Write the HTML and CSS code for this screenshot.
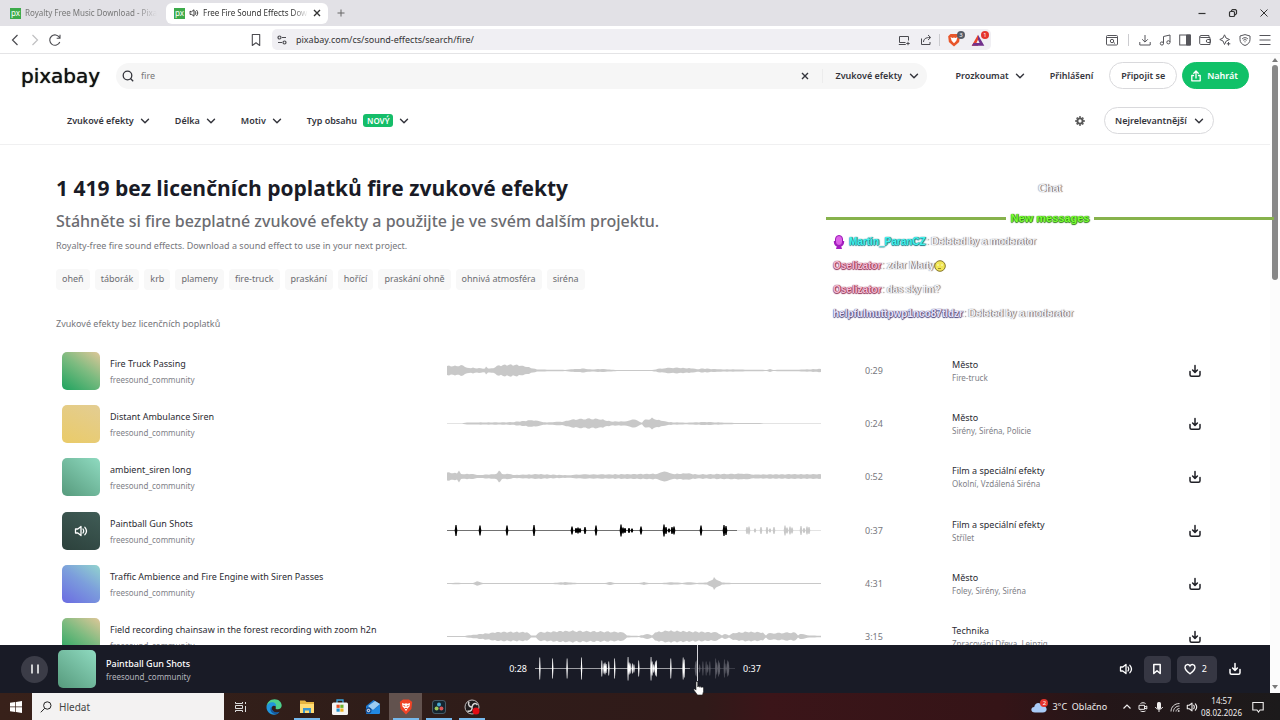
FILE: index.html
```html
<!DOCTYPE html>
<html lang="cs">
<head>
<meta charset="utf-8">
<title>Free Fire Sound Effects Download - Pixabay</title>
<link rel="stylesheet" href="styles.css">
</head>
<body>
<svg class="defs" aria-hidden="true">
  <defs>
    <symbol id="chev" viewBox="0 0 10 10"><path d="M1.500 3.200 5 6.800 8.500 3.200" fill="none" stroke="currentColor" stroke-width="1.400" stroke-linecap="round" stroke-linejoin="round"/></symbol>
    <symbol id="down" viewBox="0 0 14 14"><path d="M7 1.500v6.800M4.600 6 7 8.400 9.400 6M2 7.500v3.200c0 .9.6 1.500 1.500 1.500h7c.9 0 1.500-.6 1.500-1.500V7.500" fill="none" stroke="currentColor" stroke-width="1.500" stroke-linecap="round" stroke-linejoin="round"/></symbol>
    <symbol id="sound" viewBox="0 0 14 14"><path d="M1.500 5v4h2.300L7 11.500v-9L3.800 5zM9 5c.8 1.200.8 2.800 0 4M10.900 3.300c1.900 2.200 1.900 5.200 0 7.400" fill="none" stroke="currentColor" stroke-width="1.300" stroke-linecap="round" stroke-linejoin="round"/></symbol>
    <symbol id="close" viewBox="0 0 10 10"><path d="m2 2 6 6M8 2 2 8" fill="none" stroke="currentColor" stroke-width="1.400"/></symbol>
  </defs>
</svg>

<header class="tabs">
  <button class="tab"><span class="favicon">px</span><span class="tab-text">Royalty Free Music Download - Pixabay</span></button>
  <button class="tab active"><span class="favicon">px</span><svg class="i10"><use href="#sound"/></svg><span class="tab-text">Free Fire Sound Effects Download</span><svg class="i10"><use href="#close"/></svg></button>
  <button class="bare new-tab" aria-label="Nová karta"><svg class="i10" viewBox="0 0 10 10"><path d="M5 1.500v7M1.500 5h7" stroke="currentColor"/></svg></button>
  <div class="window-buttons">
    <button class="bare" aria-label="Minimalizovat"><svg class="i10" viewBox="0 0 10 10"><path d="M1.500 5.500h7" stroke="currentColor" stroke-width="1.200"/></svg></button>
    <button class="bare" aria-label="Obnovit"><svg class="i10" viewBox="0 0 10 10" fill="none" stroke="currentColor" stroke-width="1.200"><rect x="1.500" y="3.500" width="5" height="5" rx="1"/><path d="M3.500 3.500v-1l1-.9h3l1 1v3l-1 1h-.9"/></svg></button>
    <button class="bare" aria-label="Zavřít"><svg class="i10" viewBox="0 0 10 10"><path d="m1.500 1.500 7 7M8.500 1.500l-7 7" stroke="currentColor"/></svg></button>
  </div>
</header>

<nav class="toolbar" aria-label="Prohlížeč">
  <div class="nav-buttons">
    <button class="bare" aria-label="Zpět"><svg class="i14" viewBox="0 0 14 14"><path d="M9.500 2 4.500 7l5 5" fill="none" stroke="currentColor" stroke-width="1.200"/></svg></button>
    <button class="bare faded" aria-label="Vpřed"><svg class="i14" viewBox="0 0 14 14"><path d="m4.500 2 5 5-5 5" fill="none" stroke="currentColor" stroke-width="1.200"/></svg></button>
    <button class="bare" aria-label="Obnovit stránku"><svg class="i14" viewBox="0 0 14 14"><path d="M11.800 9A5.200 5.200 0 1 1 11.500 4.500M12 1.800v3.400H8.700" fill="none" stroke="currentColor" stroke-width="1.100"/></svg></button>
  </div>
  <div class="address-wrap">
    <button class="bare" aria-label="Záložka"><svg class="i14" viewBox="0 0 14 14"><path d="M3.300 1.500h7.400v11L7 9.800l-3.700 2.700z" fill="none" stroke="currentColor" stroke-width="1.100" stroke-linejoin="round"/></svg></button>
    <div class="address">
      <svg class="i12" viewBox="0 0 12 12" fill="none" stroke="currentColor" stroke-width="1.200"><circle cx="3.500" cy="3.500" r="1.500"/><path d="M6 3.500h4M2 8.500h4"/><circle cx="8.500" cy="8.500" r="1.500"/></svg>
      <input class="url" aria-label="Adresa" value="pixabay.com/cs/sound-effects/search/fire/">
      <button class="bare" aria-label="Instalovat"><svg class="i12" viewBox="0 0 12 12" fill="none" stroke="currentColor"><path d="M10.500 6.500V2.500h-9v6h6M.8 10.500h7M10 7.800v3.400M8.300 9.500h3.400"/></svg></button>
      <button class="bare" aria-label="Sdílet"><svg class="i12" viewBox="0 0 12 12" fill="none" stroke="currentColor"><path d="M1.500 4.500v6h8.500V8M3.500 8c.2-3 2-4.500 6.500-4.500M8 1l2.700 2.500L8 6"/></svg></button>
      <span class="sep"></span>
      <button class="bare badge-host" aria-label="Brave Shields"><svg class="i14" viewBox="0 0 12 12"><path d="M3 .8h6l2 2-.6 5L6 11.500 1.600 7.800 1 2.800z" fill="#e8562b"/><path d="m3 3.500 1.700.8L6 3.900l1.300.4L9 3.500 8 6.600 6 8.700 4 6.600z" fill="#fff"/></svg><span class="dot">3</span></button>
      <button class="bare badge-host" aria-label="Odměny"><svg class="i14" viewBox="0 0 12 12"><path d="M6 1.500.6 11H6L6 8.500H4.600L6 5.800z" fill="#e8452b"/><path d="M6 1.500 11.400 11H.6l1.600-2.500h5.200L6 5.800z" fill="#72318c"/></svg><span class="dot red">1</span></button>
    </div>
  </div>
  <div class="tool-icons">
    <button class="bare first" aria-label="Hledat na stránce"><svg class="i12" viewBox="0 0 12 12" fill="none" stroke="currentColor"><rect x=".5" y="1.500" width="11" height="9.500" rx="1"/><path d="M.5 3.500h11M7.500 8.200 9 9.600"/><circle cx="6" cy="7" r="1.700"/></svg></button>
    <span class="sep"></span>
    <button class="bare" aria-label="Stahování"><svg class="i12" viewBox="0 0 12 12" fill="none" stroke="currentColor"><path d="M6 1v7M3.200 5.300 6 8.100l2.800-2.800M.8 8v3h10.400V8"/></svg></button>
    <button class="bare" aria-label="Hudba"><svg class="i12" viewBox="0 0 12 12" fill="none" stroke="currentColor"><path d="M4.500 9.500v-7l6.500-1.500v7"/><circle cx="2.900" cy="9.500" r="1.600"/><circle cx="9.400" cy="8.300" r="1.600"/></svg></button>
    <button class="bare" aria-label="Postranní panel"><svg class="i12" viewBox="0 0 12 12" fill="none" stroke="currentColor"><rect x=".7" y="1" width="10.600" height="10"/><path d="M7.500 1h3.800v10H7.500z" fill="currentColor"/></svg></button>
    <button class="bare" aria-label="Peněženka"><svg class="i12" viewBox="0 0 12 12" fill="none" stroke="currentColor"><path d="M10 3.500v-2H2C.5 1.500.5 3.500 2 3.500h9v7H2c-1 0-1.300-.5-1.300-1.500V2.500M11.500 5.500H8.800a1.500 1.500 0 0 0 0 3h2.700z"/></svg></button>
    <button class="bare" aria-label="Leo AI"><svg class="i12" viewBox="0 0 12 12" fill="none" stroke="currentColor"><path d="M5.500.8 7 4l3.500 1.500L7.300 7 5.500 10.500 4 7 .8 5.500 4 4zM9.500 8v3.500M7.800 9.800h3.500"/></svg></button>
    <button class="bare" aria-label="VPN"><svg class="i12" viewBox="0 0 12 12" fill="none" stroke="currentColor"><path d="M6 .6 11 2v3.500c0 3-2 5-5 6-3-1-5-3-5-6V2zM3.200 4.800c1.600-1.500 4-1.500 5.600 0M4.300 6.300c1-.9 2.400-.9 3.400 0M5.500 7.800h1"/></svg></button>
    <button class="bare" aria-label="Nabídka"><svg class="i12" viewBox="0 0 12 12" stroke="currentColor"><path d="M.5 1.500h11M.5 6h11M.5 10.500h11"/></svg></button>
  </div>
</nav>

<div class="viewport">
  <div class="page">
    <div class="scroller">
      <header class="site-header">
        <div class="top-row">
          <a class="logo" href="#">pixabay</a>
          <form class="search">
            <svg class="i12" viewBox="0 0 12 12" fill="none" stroke="currentColor" stroke-width="1.300"><circle cx="5.500" cy="5.500" r="4.300"/><path d="m8.500 8.500 2.700 2.700"/></svg>
            <input aria-label="Hledat" value="fire">
            <button type="button" class="bare clear" aria-label="Vymazat"><svg class="i10"><use href="#close"/></svg></button>
            <span class="pick"><select aria-label="Kategorie"><option>Zvukové efekty</option></select><svg class="i10"><use href="#chev"/></svg></span>
          </form>
          <button class="bare menu explore">Prozkoumat<svg class="i10"><use href="#chev"/></svg></button>
          <a class="login" href="#">Přihlášení</a>
          <button class="pill join">Připojit se</button>
          <button class="pill upload"><svg class="i12" viewBox="0 0 12 12" fill="none" stroke="currentColor" stroke-width="1.300" stroke-linecap="round" stroke-linejoin="round"><path d="M6 8V1.200M3.800 3.200 6 1l2.200 2.200M3.500 5.500H1.800v5.300h8.400V5.500H8.500"/></svg>Nahrát</button>
        </div>
        <div class="filter-row">
          <button class="bare menu">Zvukové efekty<svg class="i10"><use href="#chev"/></svg></button>
          <button class="bare menu">Délka<svg class="i10"><use href="#chev"/></svg></button>
          <button class="bare menu">Motiv<svg class="i10"><use href="#chev"/></svg></button>
          <button class="bare menu">Typ obsahu<span class="new">NOVÝ</span><svg class="i10"><use href="#chev"/></svg></button>
          <button class="bare gear" aria-label="Nastavení"><svg class="i10" viewBox="0 0 10 10" fill="none" stroke="currentColor"><circle cx="5" cy="5" r="2.600" stroke-width="1.900"/><path d="M5 .3v1.500M5 8.200v1.500M.3 5h1.500M8.200 5h1.500M1.700 1.700l1 1M7.300 7.300l1 1M1.700 8.300l1-1M7.300 2.700l1-1" stroke-width="1.900"/></svg></button>
          <span class="pill pick sort"><select aria-label="Řazení"><option>Nejrelevantnější</option></select><svg class="i10"><use href="#chev"/></svg></span>
        </div>
      </header>

      <main>
        <h1>1 419 bez licenčních poplatků fire zvukové efekty</h1>
        <h2>Stáhněte si fire bezplatné zvukové efekty a použijte je ve svém dalším projektu.</h2>
        <p class="note">Royalty-free fire sound effects. Download a sound effect to use in your next project.</p>
        <nav class="tags" aria-label="Související">
          <a href="#">oheň</a><a href="#">táborák</a><a href="#">krb</a><a href="#">plameny</a><a href="#">fire-truck</a><a href="#">praskání</a><a href="#">hořící</a><a href="#">praskání ohně</a><a href="#">ohnivá atmosféra</a><a href="#">siréna</a>
        </nav>
        <p class="note list-title">Zvukové efekty bez licenčních poplatků</p>
        <ul class="tracks">
          <li class="track"><div class="thumb green"></div><div class="names"><a href="#">Fire Truck Passing</a><small>freesound_community</small></div><svg class="wave" data-wave="truck"></svg><time>0:29</time><div class="kind"><a href="#">Město</a><small>Fire-truck</small></div><button class="bare" aria-label="Stáhnout"><svg class="i14"><use href="#down"/></svg></button></li>
          <li class="track"><div class="thumb sand"></div><div class="names"><a href="#">Distant Ambulance Siren</a><small>freesound_community</small></div><svg class="wave" data-wave="ambulance"></svg><time>0:24</time><div class="kind"><a href="#">Město</a><small>Sirény, Siréna, Policie</small></div><button class="bare" aria-label="Stáhnout"><svg class="i14"><use href="#down"/></svg></button></li>
          <li class="track"><div class="thumb mint"></div><div class="names"><a href="#">ambient_siren long</a><small>freesound_community</small></div><svg class="wave" data-wave="ambient"></svg><time>0:52</time><div class="kind"><a href="#">Film a speciální efekty</a><small>Okolní, Vzdálená Siréna</small></div><button class="bare" aria-label="Stáhnout"><svg class="i14"><use href="#down"/></svg></button></li>
          <li class="track"><div class="thumb playing"><svg class="i14"><use href="#sound"/></svg></div><div class="names"><a href="#">Paintball Gun Shots</a><small>freesound_community</small></div><svg class="wave" data-wave="shots" data-played="290"></svg><time>0:37</time><div class="kind"><a href="#">Film a speciální efekty</a><small>Střílet</small></div><button class="bare" aria-label="Stáhnout"><svg class="i14"><use href="#down"/></svg></button></li>
          <li class="track"><div class="thumb blue"></div><div class="names"><a href="#">Traffic Ambience and Fire Engine with Siren Passes</a><small>freesound_community</small></div><svg class="wave" data-wave="traffic"></svg><time>4:31</time><div class="kind"><a href="#">Město</a><small>Foley, Sirény, Siréna</small></div><button class="bare" aria-label="Stáhnout"><svg class="i14"><use href="#down"/></svg></button></li>
          <li class="track"><div class="thumb green"></div><div class="names"><a href="#">Field recording chainsaw in the forest recording with zoom h2n</a><small>freesound_community</small></div><svg class="wave" data-wave="chainsaw"></svg><time>3:15</time><div class="kind"><a href="#">Technika</a><small>Zpracování Dřeva, Leipzig</small></div><button class="bare" aria-label="Stáhnout"><svg class="i14"><use href="#down"/></svg></button></li>
        </ul>
      </main>
    </div>

    <footer class="player">
      <div class="now">
        <button class="pause" aria-label="Pozastavit"><svg class="i14" viewBox="0 0 14 14"><path d="M4 2.500v9M10 2.500v9" stroke="#fff" stroke-width="1.500"/></svg></button>
        <div class="thumb mint"></div>
        <div class="names"><strong>Paintball Gun Shots</strong><small>freesound_community</small></div>
      </div>
      <div class="progress"><time>0:28</time><div class="seek"><svg class="wave" data-wave="shots" data-played="290" data-gain="2"></svg><span class="seek-line"></span></div><time>0:37</time></div>
      <div class="player-actions">
        <button class="bare" aria-label="Hlasitost"><svg class="i14"><use href="#sound"/></svg></button>
        <button class="chip" aria-label="Uložit"><svg class="i12" viewBox="0 0 12 12"><path d="M2.800 1.500h6.400v9L6 7.800l-3.200 2.700z" fill="none" stroke="currentColor" stroke-width="1.500" stroke-linejoin="round"/></svg></button>
        <button class="chip"><svg class="i12" viewBox="0 0 12 12"><path d="M6 10.800C2 7.800 1 6 1 4.200 1 1.200 4.800.6 6 3c1.200-2.400 5-1.800 5 1.200 0 1.800-1 3.600-5 6.600z" fill="none" stroke="currentColor" stroke-width="1.400"/></svg>2</button>
        <button class="bare last" aria-label="Stáhnout"><svg class="i14"><use href="#down"/></svg></button>
      </div>
      <svg class="hand" viewBox="0 0 12 15"><path d="M3 1.300C3 .3 4.700.3 4.700 1.300V6c0-.9 1.700-.9 1.700.2 0-.9 1.700-.8 1.700.3 0-.8 2.400-.7 2.400.7v3.300L9.500 14h-5L1 9.300c-.6-1 .6-1.700 1.300-.9l.7.7z" fill="#fff" stroke="#222" stroke-width=".6"/></svg>
    </footer>
  </div>
  <div class="scrollbar"><span class="arrow up"></span><span class="bar"></span><span class="arrow"></span></div>
</div>

<aside class="chat" aria-label="Chat">
  <h3>Chat</h3>
  <div class="new-messages"><span>New messages</span></div>
  <p><svg class="mic" viewBox="0 0 12 14"><path d="M.8 6c0 4 1.700 5 3 5.300L3 14h6l-.8-2.700c1.300-.3 3-1.300 3-5.300" fill="#a41cc0"/><rect x="2.500" y=".5" width="7" height="10" rx="3.500" fill="#dd62e8" stroke="#9a1ab5"/></svg><b class="cyan">Martin_ParanCZ</b>: Deleted by a moderator</p>
  <p><b class="pink">Oselizator</b>: zdar Marty<svg class="smile" viewBox="0 0 12 12"><circle cx="6" cy="6" r="5.300" fill="#f1e655" stroke="#85752b"/><path d="M3 5h2M7 5h2" stroke="#fffbc4"/><path d="M4 8.500h3" stroke="#a08c30"/></svg></p>
  <p><b class="pink">Oselizator</b>: das sky im?</p>
  <p><b class="violet">helpfulmuttpwp1nco87tldzr</b>: Deleted by a moderator</p>
</aside>

<footer class="taskbar">
  <button class="bare start" aria-label="Start"><svg class="i12" viewBox="0 0 12 12" fill="#fff"><path d="M0 1.700 5.300 1v4.600H0zM6 .9 12 0v5.600H6zM0 6.300h5.300V11L0 10.300zM6 6.300h6V12l-6-.9z"/></svg></button>
  <label class="task-search"><svg class="i12" viewBox="0 0 12 12" fill="none" stroke="#222"><circle cx="7.300" cy="4.500" r="3.700"/><path d="M4.700 7.300.8 11.300"/></svg><input placeholder="Hledat" aria-label="Hledat ve Windows"></label>
  <button class="bare app" aria-label="Zobrazení úkolů"><svg class="i12" viewBox="0 0 12 12" fill="none" stroke="#ddd"><path d="M.5 1v1.500h7V1M.5 11V9.500h7V11M.5 4.500h7v3h-7zM10.500 1v2M10.500 5v6"/></svg></button>
  <button class="bare app" aria-label="Edge"><svg class="i16" viewBox="0 0 16 16"><path d="M.5 7.500C1 3 4.500.2 8.500.2c4.300 0 7.200 3 7.200 6.300 0 2.400-1.700 3.700-4 3.700-1.700 0-2.600-.8-1.900-1.800C10.500 6.500 8 4.600 5.500 4.600 3 4.600 1.200 5.700.5 7.500z" fill="#4dcf8c"/><path d="M.5 7.500C1.200 4.800 3.500 3.200 6 3.200c3 0 4.500 2 4 4.300C7 5.500 5 8 5.800 10.500c.8 2.700 4.300 4.300 7.700 2.300-1.300 2-3.500 3-5.500 3C3.500 15.700.2 12 .5 7.500z" fill="#2196dc"/><path d="M5.400 7.500c-2.500 3.500.3 8 5.400 7.700 1-.4 2-1.200 2.700-2.400-4 1.700-8-.5-8.100-5.300z" fill="#155aa0"/></svg></button>
  <button class="bare app open" aria-label="Průzkumník"><svg class="i16" viewBox="0 0 16 16"><path d="M1 1.500h5L7.500 3H15v11H1z" fill="#e5b441"/><path d="M1 5h14v9H1z" fill="#ffdc74"/><path d="M4 14V9h8v5h-2v-2.500H6V14z" fill="#3b97cf"/></svg></button>
  <button class="bare app" aria-label="Store"><svg class="i16" viewBox="0 0 16 16"><path d="M5 4V1h6v3" fill="none" stroke="#3aa5dd" stroke-width="1.300"/><rect y="3.500" width="16" height="12.500" rx="1.500" fill="#f4f4f4"/><path d="M4.500 5.700h3.200v3.200H4.500z" fill="#e34f26"/><path d="M8.300 5.700h3.200v3.200H8.300z" fill="#6fb32c"/><path d="M4.500 9.500h3.200v3.200H4.500z" fill="#1e93d2"/><path d="M8.300 9.500h3.200v3.200H8.300z" fill="#efb320"/></svg></button>
  <button class="bare app" aria-label="Pošta"><svg class="i16" viewBox="0 0 16 16"><path d="m1 7 7.500-6L15 5v9l-1 1H2l-1-1z" fill="#1976cf"/><path d="M3 7 10 2l5 3-7 6z" fill="#9cccf2"/><path d="m1 8 7 3.500L15 6v8l-1 1H2l-1-1z" fill="#2188e2"/><circle cx="3.500" cy="11.500" r="3" fill="#174e94"/><circle cx="3.500" cy="11.500" r="1.200" fill="none" stroke="#fff"/></svg></button>
  <button class="bare app open current" aria-label="Brave"><svg class="i16" viewBox="0 0 16 16"><path d="M5 .5h6L14.200 3l-.8 7L8 15.500 2.600 10l-.8-7z" fill="#f04427"/><path d="m4 4 2.300.8L8 4.300l1.700.5L12 4l-.5 3.500-2 2L8 12.300 6.500 9.500l-2-2z" fill="#fff"/><path d="m5.500 6.500 1.800.7M10.500 6.500l-1.800.7M7 9.500h2" stroke="#f04427"/></svg></button>
  <button class="bare app open" aria-label="DaVinci Resolve"><svg class="i16" viewBox="0 0 16 16"><rect x="1.500" y="1.500" width="13" height="13" rx="2.500" fill="#14252f" stroke="#587484" stroke-width=".7"/><circle cx="8" cy="5.500" r="2" fill="#49a9d1"/><circle cx="5.600" cy="9.600" r="2" fill="#9fca5d"/><circle cx="10.400" cy="9.600" r="2" fill="#df5756"/></svg></button>
  <button class="bare app open" aria-label="OBS Studio"><svg class="i16" viewBox="0 0 16 16"><circle cx="8" cy="8" r="7" fill="#1f1c1d" stroke="#bdb9b9"/><path d="M5 2.500c-1.500 4 1 5.500 3 5.500M13.500 6C11 3 8.500 5 8 8M3.500 12c3.500.8 5-1.500 4.500-4" fill="none" stroke="#d8d5d5" stroke-width="1.500"/><circle cx="12" cy="12" r="3.500" fill="#e30b14"/></svg></button>
  <div class="tray">
    <button class="bare weather"><span class="badge-host"><svg class="i16" viewBox="0 0 16 16"><path d="M4 13.500c-5 0-4.500-5.500-.8-5.500C4 3 10 3 10.800 7c6-.8 6.500 6.500 1 6.500z" fill="#a9cbf7"/></svg><span class="dot red">2</span></span>3°C&nbsp; Oblačno</button>
    <button class="bare" aria-label="Skryté ikony"><svg class="i10" viewBox="0 0 10 10"><path d="M1.500 6.500 5 3l3.500 3.500" fill="none" stroke="currentColor" stroke-width="1.200"/></svg></button>
    <button class="bare" aria-label="Schůzka"><svg class="i10" viewBox="0 0 10 10" fill="none" stroke="currentColor"><path d="M2.500 1.500c1.500-1 3.500-1 5 0M2.500 9c1.500.8 3.500.8 5 0M1 3.300h5.500v4H1zM6.500 5l2.300-1v3L6.500 6"/></svg></button>
    <button class="bare" aria-label="Mikrofon"><svg class="i10" viewBox="0 0 10 10"><rect x="3" width="4" height="7" rx="1.500" fill="currentColor"/><path d="M1.500 5c.3 3 6.700 3 7 0M5 7.500V10" fill="none" stroke="currentColor"/></svg></button>
    <button class="bare" aria-label="Wi-Fi"><svg class="i10" viewBox="0 0 10 10" fill="none" stroke="currentColor"><path d="M1 9.500C1 5 4.500 1.500 9.500 1.500M3.500 9.500c0-3 2.500-5.500 6-5.500M6 9.500C6 8 7.500 6.500 9.500 6.500" stroke-width=".9"/><circle cx="8.700" cy="9" r=".6"/></svg></button>
    <button class="bare" aria-label="Zvuk"><svg class="i12"><use href="#sound"/></svg></button>
    <time class="clock">14:57<br>08.02.2026</time>
    <button class="bare" aria-label="Oznámení"><svg class="i12" viewBox="0 0 12 12"><path d="M.8 1.500h10.400v7.500H8L6.500 11 5 9H.8z" fill="none" stroke="currentColor" stroke-width="1.100"/></svg></button>
  </div>
</footer>
<script src="waves.js"></script>
</body>
</html>
```
FILE: styles.css
```css
* { box-sizing: border-box; }
body {
  margin: 0;
  height: 100vh;
  display: flex;
  flex-direction: column;
  overflow: hidden;
  background: #fff;
  color: #191b26;
  font: 9px/14px "Noto Sans", sans-serif;
}
button, input, select { font: inherit; color: inherit; }
a { color: inherit; text-decoration: none; }
svg { display: block; flex: none; }
h1, h2, h3, p, ul { margin: 0; padding: 0; }
small { font-size: 8px; }
.defs { position: absolute; width: 0; height: 0; }
.i10 { width: 10px; height: 10px; }
.i12 { width: 12px; height: 12px; }
.i14 { width: 14px; height: 14px; }
.i16 { width: 16px; height: 16px; }
.bare { border: 0; background: none; padding: 0; display: flex; align-items: center; }

/* Browser frame */
.tabs { flex: none; height: 26px; background: #e2e1e6; display: flex; align-items: center; color: #333; font-size: 8px; }
.tab { height: 21px; width: 162px; border: 0; border-radius: 6px; background: none; padding: 0 5px 0 10px; display: flex; align-items: center; gap: 4px; color: #777; }
.tab.active { background: #fff; color: #333; padding: 0 6px 0 8px; margin-left: 4px; }
.tab-text { flex: 1; overflow: hidden; white-space: nowrap; text-align: left; mask-image: linear-gradient(90deg, #000 85%, transparent); }
.favicon { width: 11px; height: 11px; background: #3dab4b; color: #fff; font-size: 8px; line-height: 10px; text-align: center; }
.new-tab { margin-left: 8px; color: #666; }
.window-buttons { margin-left: auto; display: flex; gap: 21px; padding-right: 11px; }
.toolbar { flex: none; height: 28px; border-bottom: 1px solid #e4e4e6; display: flex; align-items: center; color: #4b4b50; }
.nav-buttons { display: flex; gap: 6px; padding-left: 8px; flex: 1; }
.faded { opacity: .35; }
.address-wrap { flex: 0 1 742px; display: flex; align-items: center; gap: 9px; margin-right: 115px; }
.address { flex: 1; height: 21px; border-radius: 5px; background: #f0eff3; display: flex; align-items: center; gap: 10px; padding: 0 6px 0 4px; }
.url { flex: 1; min-width: 0; border: 0; background: none; padding: 0; color: #333; margin-left: -2px; }
.sep { width: 1px; height: 12px; background: #ccccd0; }
.address .sep { margin: 0 -3px; }
.badge-host { position: relative; }
.dot { position: absolute; right: -4px; top: -2px; width: 8px; height: 8px; border-radius: 50%; background: #555b66; color: #fff; font-size: 6px; line-height: 8px; text-align: center; }
.dot.red { background: #e5352d; }
.tool-icons { display: flex; align-items: center; gap: 8px; padding-right: 9px; color: #55555a; }
.tool-icons .sep { margin: 0 2px; }

/* Page */
.viewport { flex: 1; min-height: 0; display: flex; }
.page { flex: 1; min-width: 0; position: relative; display: flex; flex-direction: column; }
.scroller { flex: 1; min-height: 0; overflow: hidden; }
.scrollbar { flex: none; width: 10px; background: #fcfcfc; display: flex; flex-direction: column; align-items: center; padding: 4px 0; }
.bar { width: 6px; height: 215px; border-radius: 3px; background: #878787; margin: 3px 0 auto; }
.arrow { border: 3px solid transparent; border-top: 4px solid #7a7a7a; border-bottom: 0; }
.arrow.up { border-bottom: 4px solid #7a7a7a; border-top: 0; }

.site-header { border-bottom: 1px solid #f0f0f1; font-weight: 600; color: #34353c; padding: 8px 21px 10px; }
.top-row, .filter-row { display: flex; align-items: center; }
.logo { font: 20px/24px "DejaVu Sans", sans-serif; color: #111; text-shadow: 0 0 1px #111; flex: none; width: 95px; }
.search { flex: 1; height: 26px; border-radius: 14px; background: #f6f6f6; display: flex; align-items: center; padding: 0 8px 0 6px; }
.search input { flex: 1; min-width: 0; border: 0; background: none; padding: 0 0 0 7px; color: #777; font-weight: 400; }
.clear { margin-right: 12px; }
.search .pick { border-left: 1px solid #ececec; padding-left: 12px; }
.pick { display: flex; align-items: center; gap: 7px; }
.pick select { appearance: none; border: 0; background: none; padding: 0; font-weight: 600; }
.menu { gap: 6px; font-weight: 600; white-space: nowrap; }
.explore { margin-left: 28px; }
.login { margin: 0 16px 0 25px; }
.pill { height: 27px; border: 1px solid #d9d9dc; border-radius: 14px; background: #fff; padding: 0 11px; font-weight: 600; display: flex; align-items: center; }
.upload { background: #10c168; border-color: #10c168; color: #fff; margin-left: 5px; gap: 5px; padding: 0 10px 0 7px; }
.filter-row { padding: 0 35px 0 46px; margin-top: 18px; gap: 25px; }
.new { background: #15bd69; color: #fff; border-radius: 3px; padding: 0 4px; font-size: 8px; line-height: 13px; }
.gear { margin-left: auto; color: #555; }
.sort { margin-left: -6px; padding: 0 9px 0 10px; }

main { padding: 29px 68px 0 56px; }
h1 { font-size: 21px; line-height: 28px; font-weight: 700; white-space: nowrap; font-family: "Open Sans", sans-serif; }
h2 { font-size: 16px; line-height: 22px; font-weight: 500; color: #6b6c71; margin-top: 8px; white-space: nowrap; }
.note { color: #75767b; margin-top: 7px; }
.tags { display: flex; gap: 5px; margin-top: 16px; color: #6b6c71; }
.tags a { background: #f8f8f8; border-radius: 4px; padding: 3px 6px 4px; }
.list-title { margin-top: 27px; }
.tracks { list-style: none; margin-top: 21px; padding-left: 6px; display: grid; gap: 15px; }
.track { display: grid; grid-template-columns: 38px minmax(0, 347fr) minmax(0, 374fr) minmax(0, 131fr) minmax(0, 236fr) 14px; align-items: center; height: 38px; color: #2b2c33; white-space: nowrap; }
.track:nth-child(3) { margin-bottom: 1px; }
.thumb { width: 38px; height: 38px; border-radius: 5px; display: grid; place-items: center; }
.green { background: linear-gradient(215deg, #dfc798 0%, #7dbb80 45%, #1ea35f 100%); }
.sand { background: linear-gradient(205deg, #e3cd93, #eacb68); }
.mint { background: linear-gradient(220deg, #8fdac0, #569a7c); }
.playing { background: linear-gradient(205deg, #405c56, #2c413c); color: #fff; }
.blue { background: linear-gradient(215deg, #92d4ce 0%, #7c9edc 45%, #6b6be2 100%); }
.names { display: grid; gap: 2px; padding: 2px 0 0 10px; }
.names small, .kind small { color: #808187; }
.kind { display: grid; line-height: 13px; }
.track time { color: #77787e; padding-left: 44px; }
.wave { width: 100%; height: 24px; color: #c8c8c8; }
.track .bare { color: #202127; }

/* Player */
.player { flex: none; height: 48px; background: #191b26; color: #fff; display: grid; grid-template-columns: 1fr auto 1fr; align-items: center; position: relative; }
.now { display: flex; align-items: center; padding-left: 21px; }
.now .thumb { margin-left: 10px; }
.pause { width: 27px; height: 27px; border: 0; border-radius: 50%; background: #3b3c47; padding: 0; display: grid; place-items: center; }
.player .names { gap: 0; line-height: 13px; }
.player strong { font-weight: 500; }
.player small { color: #b5b6bd; }
.progress { display: flex; align-items: center; gap: 8px; }
.seek { position: relative; width: 200px; }
.seek .wave { color: #5d5e68; }
.seek-line { position: absolute; left: 81%; top: -12px; width: 1px; height: 36px; background: #d5d5da; }
.hand { position: absolute; left: calc(50% + 58px); bottom: -3px; width: 12px; height: 15px; z-index: 2; }
.player-actions { display: flex; align-items: center; justify-content: flex-end; gap: 6px; padding-right: 28px; }
.chip { height: 27px; min-width: 27px; border: 0; border-radius: 5px; background: #363743; color: #fff; padding: 0 7px; display: flex; align-items: center; justify-content: center; gap: 6px; font-size: 9px; }
.chip + .chip { padding-right: 10px; }
.player-actions .bare:first-child { margin-right: 5px; }
.last { margin-left: 5px; }

/* Stream chat floating over the window */
.chat { position: absolute; left: 826px; right: 6px; top: 181px; color: #fff; font: 10px/14px "Liberation Sans", sans-serif; text-shadow: 1px 0 1px #43434e, -1px 0 1px #a8a8b2; display: grid; gap: 10px; }
.chat h3 { font: inherit; font-size: 11px; line-height: 14px; text-align: center; }
.chat p { display: flex; align-items: center; padding-left: 7px; white-space: pre; }
.new-messages { display: flex; align-items: center; gap: 5px; margin-top: 6px; color: #79ff35; font-weight: 700; font-size: 11px; text-shadow: 0 0 1px #287a10, 1px 0 1px #287a10, 0 1px 1px #287a10; }
.new-messages::before, .new-messages::after { content: ""; flex: 1; height: 3px; background: #87b24c; }
.mic { width: 12px; height: 14px; margin-right: 4px; }
.smile { width: 12px; height: 12px; }
.cyan { color: #43f2ec; text-shadow: 0 0 1px #167c86, 1px 0 1px #167c86, 0 1px 1px #167c86; }
.pink { color: #f6bcd2; text-shadow: 0 0 1px #8d2d55, 1px 0 1px #8d2d55, 0 1px 1px #8d2d55; }
.violet { color: #e8e4fb; text-shadow: 0 0 1px #4a447c, 1px 0 1px #4a447c, 0 1px 1px #4a447c; }

/* Taskbar */
.taskbar { flex: none; height: 27px; background: linear-gradient(90deg, #38211a 0%, #2f1d19 30%, #301a19 55%, #3b1519 60%, #351417 78%, #241618 86%, #1c1a1b 100%); color: #f0eeee; display: flex; align-items: stretch; line-height: 12px; }
.start { width: 32px; justify-content: center; }
.task-search { width: 192px; background: #f3f2f2; display: flex; align-items: center; gap: 7px; padding-left: 8px; }
.task-search input { border: 0; background: none; width: 120px; padding: 0; font-size: 10px; }
.task-search input::placeholder { color: #444; }
.app { width: 33px; justify-content: center; }
.open { background: linear-gradient(#76b9ed, #76b9ed) center bottom / 26px 2px no-repeat; }
.current { background-color: #62524e; }
.tray { margin-left: auto; display: flex; align-items: center; gap: 6px; padding-right: 16px; }
.weather { gap: 5px; margin-right: 9px; }
.weather .dot { right: -1px; top: 0; }
.clock { text-align: center; font-size: 8px; margin: 0 4px 0 -3px; }
```
FILE: waves.js
```js
// Loudness envelopes as [x, half-height] pairs on a 374 x 24 canvas.
const envelopes = {
  truck: [[0,4.5],[10,4.3],[16,5],[20,2.800],[38,2],[39,4],[41,2],[48,3],[50,4.8],[62,5.800],[76,4.800],[86,2],[90,1],[118,.6],[126,1.300],[135,2],[145,1],[155,1.500],[170,.5],[205,.5],[213,2],[228,2.700],[246,2],[250,1.300],[256,2],[270,1.200],[320,.6],[323,1.500],[326,.6],[350,.8],[374,1.500]],
  ambulance: [[0,.3],[15,.3],[20,.9],[65,1.300],[85,3.300],[100,1],[117,2],[125,4],[150,4.800],[164,2],[176,2],[187,4],[192,2],[195,.8],[198,4],[203,4],[205,6],[208,4],[218,2.300],[222,1.300],[240,.8],[258,1.500],[275,.9],[295,.4],[374,.3]],
  ambient: [[0,4],[10,3],[12,6],[14,2.500],[24,2.500],[32,1.500],[48,2.300],[50,3],[52,6],[55,2.500],[60,2.800],[66,1.500],[90,2.200],[120,1.300],[135,2],[160,2],[210,2.600],[219,4.800],[226,2.500],[240,3],[250,2],[295,2.700],[310,2],[374,2.300]],
  traffic: [[0,.4],[8,.7],[26,.4],[30,2.200],[36,.5],[106,.5],[118,1.400],[130,.5],[158,.4],[163,1.500],[168,.5],[192,.4],[197,1.500],[202,.5],[215,.5],[225,1.300],[235,.6],[242,1.300],[250,.6],[260,1],[264,3],[266,4],[267,6.500],[269,4],[271,3],[275,1],[286,.5],[374,.4]],
  chainsaw: [[0,.4],[18,.4],[20,1],[40,3],[52,4.500],[80,4.200],[84,1],[89,1],[92,4],[120,5.500],[175,4.300],[180,1],[192,.6],[200,2.500],[205,1],[208,4],[220,5.500],[270,4],[275,1],[278,2.500],[282,1],[286,3.500],[300,4.500],[316,4],[319,1],[321,3],[348,4],[351,1],[353,2.500],[364,1],[374,.7]],
  shots: [[0,.35]]
};

[[9,5.500],[33,5],[60,5],[87,5.500],[125,4],[129,2.500],[131,3],[133,2.200],[138,3.500],[149,5],[174,6],[176,3],[178,2.500],[182,2.500],[185,2],[194,4],[217,6],[219,3.500],[222,2],[225,3.500],[227,4],[254,5],[277,5.500],[279,4.500],[300,3.500],[302,4],[308,2],[314,3.500],[320,3.500],[323,2],[327,3.500],[338,5],[340,3],[343,4],[345,3],[354,4.500],[357,2.500],[360,4],[362,3.500]]
  .forEach(([x, h]) => envelopes.shots.push([x - 1.300, .35], [x - .5, h], [x + .5, h], [x + 1.300, .35]));
envelopes.shots.push([374, .35]);

const middle = 11.5;

function outline(points, gain) {
  const top = [];
  for (let i = 1; i < points.length; i++) {
    const [x0, h0] = points[i - 1];
    const [x1, h1] = points[i];
    const steps = Math.max(1, Math.round((x1 - x0) / 2));
    for (let s = 0; s < steps; s++) {
      const x = x0 + (x1 - x0) * s / steps;
      let h = h0 + (h1 - h0) * s / steps;
      if (h > 1 && s) h *= 1 + .15 * Math.sin(x * 7.300);
      top.push([x, h > 1 ? h * gain : h]);
    }
  }
  top.push([374, points[points.length - 1][1]]);
  const upper = top.map(([x, h]) => `${x.toFixed(1)} ${(middle - h).toFixed(2)}`);
  const lower = top.reverse().map(([x, h]) => `${x.toFixed(1)} ${(middle + h).toFixed(2)}`);
  return `M${upper.concat(lower).join("L")}Z`;
}

document.querySelectorAll(".wave").forEach((svg, n) => {
  const played = Number(svg.dataset.played || 0);
  const gain = Number(svg.dataset.gain || 1);
  const shape = outline(envelopes[svg.dataset.wave], gain);
  const front = gain > 1 ? "#fff" : "#000";
  svg.setAttribute("viewBox", "0 0 374 24");
  svg.setAttribute("preserveAspectRatio", "none");
  svg.innerHTML = `<path d="${shape}" fill="currentColor"/>` +
    (played ? `<clipPath id="played${n}"><rect width="${played}" height="24"/></clipPath><path d="${shape}" fill="${front}" clip-path="url(#played${n})"/>` : "");
});
```
